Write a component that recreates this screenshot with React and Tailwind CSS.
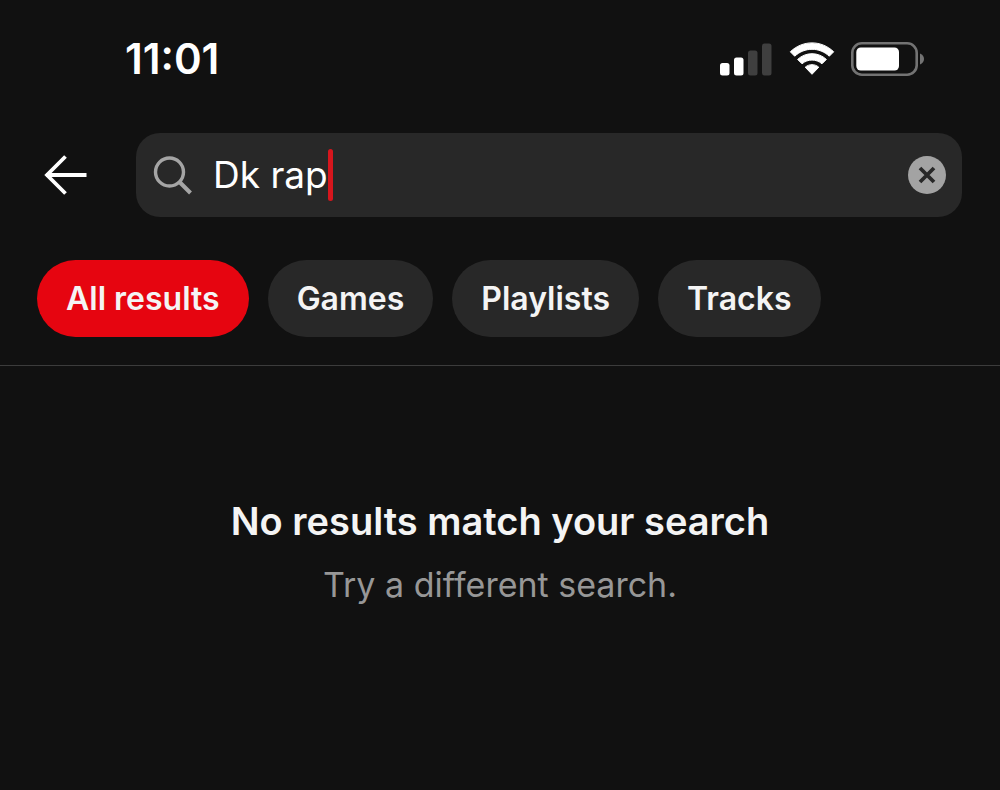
import { useRef, useState } from "react";

const filters = ["All results", "Games", "Playlists", "Tracks"];

function SignalIcon() {
  return (
    <svg width="52" height="34" viewBox="0 0 52 34" role="img" aria-label="Signal">
      <rect x="0" y="21" width="9.5" height="12.5" rx="2.5" fill="#fff" />
      <rect x="14" y="15.5" width="9.5" height="18" rx="2.5" fill="#fff" />
      <rect x="28" y="8.5" width="9.5" height="25" rx="2.5" fill="#3f3f3f" />
      <rect x="42" y="1.5" width="9.5" height="32" rx="2.5" fill="#3f3f3f" />
    </svg>
  );
}

function WifiIcon() {
  return (
    <svg width="46" height="34" viewBox="0 0 46 34" role="img" aria-label="Wi-Fi">
      <g fill="#fff" stroke="#fff" strokeWidth="1" strokeLinejoin="round">
        <path d="M1.3 9.8C13.6-2.1 32.4-2.1 44.7 9.8L40.3 14.2C30.3 5 15.7 5 5.7 14.2Z" />
        <path d="M8.6 17.4C16.8 9.8 29.2 9.8 37.4 17.4L33 21.8C27.2 16.8 18.8 16.8 13 21.8Z" />
        <path d="M16.2 25.2C20.2 21.8 25.8 21.8 29.8 25.2L23 32.3Z" />
      </g>
    </svg>
  );
}

function BatteryIcon() {
  return (
    <svg width="74" height="34" viewBox="0 0 74 34" role="img" aria-label="Battery">
      <rect x="1.3" y="1.3" width="64.4" height="31.4" rx="9.5" fill="none" stroke="#737373" strokeWidth="2.6" />
      <rect x="5.3" y="5.5" width="42.7" height="23" rx="4.5" fill="#fff" />
      <path d="M69 11.5C71.6 12.6 73 14.6 73 17S71.6 21.4 69 22.5Z" fill="#737373" />
    </svg>
  );
}

function StatusBar() {
  return (
    <div className="flex h-[118px] items-center justify-between pr-[75px] pl-[125px]">
      <span className="text-[42px] leading-none font-semibold text-white">11:01</span>
      <div className="flex items-center gap-[17px]">
        <SignalIcon />
        <div className="flex items-center gap-4">
          <WifiIcon />
          <BatteryIcon />
        </div>
      </div>
    </div>
  );
}

function SearchHeader() {
  const [query, setQuery] = useState("Dk rap");
  const inputRef = useRef(null);

  const handleClear = () => {
    setQuery("");
    inputRef.current.focus();
  };

  return (
    <div className="flex items-center gap-12 pt-[15px] pr-[38px] pl-11">
      <button type="button" aria-label="Back">
        <svg width="44" height="40" viewBox="0 0 44 40" fill="none" stroke="#fff" strokeWidth="3.8">
          <path d="M21.5 1.5L3 20L21.5 38.5M2 20H42.5" />
        </svg>
      </button>
      <div className="flex h-[84px] grow items-center rounded-3xl bg-[#282828] px-4">
        <label className="flex grow cursor-text items-center">
          <svg
            className="mr-[21px]"
            width="40"
            height="40"
            viewBox="0 0 40 40"
            fill="none"
            stroke="#a5a5a5"
            strokeWidth="3.4"
            aria-hidden="true"
          >
            <circle cx="17.5" cy="17" r="14" />
            <path d="M27.5 27L38.5 38" strokeWidth="4" />
          </svg>
          <input
            ref={inputRef}
            type="text"
            aria-label="Search"
            className="field-sizing-content bg-transparent text-[37px] leading-[52px] text-white caret-transparent outline-none"
            value={query}
            onChange={(e) => setQuery(e.target.value)}
          />
          <span className="h-[52px] w-[5px] rounded-sm bg-[#d6161d]" />
        </label>
        <button type="button" aria-label="Clear search" onClick={handleClear}>
          <svg width="38" height="38" viewBox="0 0 38 38">
            <circle cx="19" cy="19" r="19" fill="#a3a3a3" />
            <path d="M12 12L26 26M26 12L12 26" stroke="#282828" strokeWidth="3.8" />
          </svg>
        </button>
      </div>
    </div>
  );
}

export default function App() {
  const [active, setActive] = useState("All results");

  return (
    <div className="min-h-screen bg-[#111111] font-[Inter,sans-serif]">
      <StatusBar />
      <SearchHeader />
      <div className="flex gap-[19px] border-b border-[#3c3c3c] px-[37px] pt-[43px] pb-7">
        {filters.map((filter) => (
          <button
            key={filter}
            type="button"
            onClick={() => setActive(filter)}
            className={`h-[77px] rounded-full px-[29px] text-[32px] font-semibold text-[#f4f4f4] ${
              active === filter ? "bg-[#e60510]" : "bg-[#282828]"
            }`}
          >
            {filter}
          </button>
        ))}
      </div>
      <main className="px-6 pt-[127px] text-center">
        <h1 className="text-[38px] leading-[56px] font-semibold text-[#f4f4f4]">No results match your search</h1>
        <p className="mt-2 text-[34px] leading-[56px] text-[#979797]">Try a different search.</p>
      </main>
    </div>
  );
}
